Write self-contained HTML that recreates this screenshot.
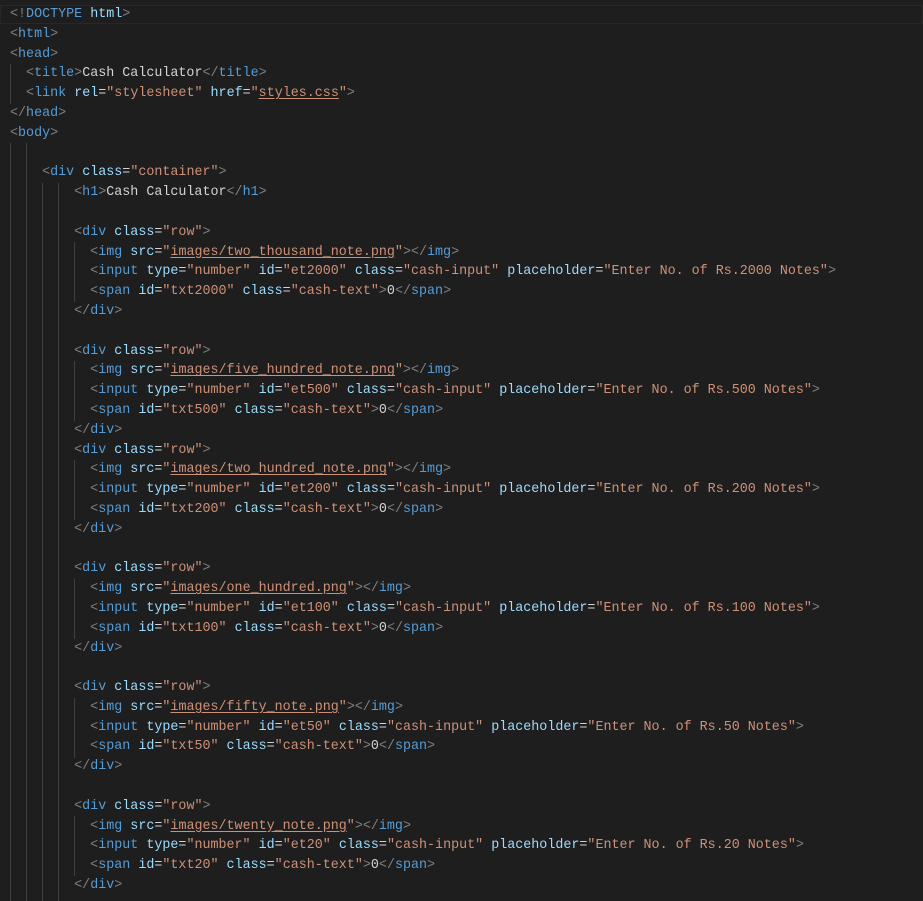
<!DOCTYPE html>
<html><head><style>
html,body{margin:0;padding:0;background:#1e1e1e;width:923px;height:901px;overflow:hidden;position:relative}
.c{position:absolute;left:10px;top:5px;font-family:"Liberation Mono",monospace;font-size:13.36px;line-height:19.8px;color:#d4d4d4}
.c div{height:19.8px;white-space:pre}
.t{color:#808080}.n{color:#569cd6}.a{color:#9cdcfe}.s{color:#ce9178}.u{text-decoration:underline;text-underline-offset:2px}
.g{position:absolute;width:1px;background:#404040}
.hl{position:absolute;left:0;top:5px;width:923px;height:19px;border:1px solid #282828;box-sizing:border-box}
</style></head><body>
<div class="hl"></div>
<div class="g" style="left:10px;top:64px;height:40px"></div>
<div class="g" style="left:10px;top:143px;height:759px"></div>
<div class="g" style="left:26px;top:143px;height:759px"></div>
<div class="g" style="left:42px;top:183px;height:719px"></div>
<div class="g" style="left:58px;top:183px;height:719px"></div>
<div class="g" style="left:74px;top:242px;height:60px"></div>
<div class="g" style="left:74px;top:361px;height:60px"></div>
<div class="g" style="left:74px;top:460px;height:60px"></div>
<div class="g" style="left:74px;top:579px;height:60px"></div>
<div class="g" style="left:74px;top:698px;height:60px"></div>
<div class="g" style="left:74px;top:816px;height:60px"></div>
<div class="c">
<div><span class="t">&lt;!</span><span class="n">DOCTYPE</span> <span class="a">html</span><span class="t">&gt;</span></div>
<div><span class="t">&lt;</span><span class="n">html</span><span class="t">&gt;</span></div>
<div><span class="t">&lt;</span><span class="n">head</span><span class="t">&gt;</span></div>
<div>  <span class="t">&lt;</span><span class="n">title</span><span class="t">&gt;</span>Cash Calculator<span class="t">&lt;/</span><span class="n">title</span><span class="t">&gt;</span></div>
<div>  <span class="t">&lt;</span><span class="n">link</span> <span class="a">rel</span>=<span class="s">"stylesheet"</span> <span class="a">href</span>=<span class="s">"<span class="u">styles.css</span>"</span><span class="t">&gt;</span></div>
<div><span class="t">&lt;/</span><span class="n">head</span><span class="t">&gt;</span></div>
<div><span class="t">&lt;</span><span class="n">body</span><span class="t">&gt;</span></div>
<div></div>
<div>    <span class="t">&lt;</span><span class="n">div</span> <span class="a">class</span>=<span class="s">"container"</span><span class="t">&gt;</span></div>
<div>        <span class="t">&lt;</span><span class="n">h1</span><span class="t">&gt;</span>Cash Calculator<span class="t">&lt;/</span><span class="n">h1</span><span class="t">&gt;</span></div>
<div></div>
<div>        <span class="t">&lt;</span><span class="n">div</span> <span class="a">class</span>=<span class="s">"row"</span><span class="t">&gt;</span></div>
<div>          <span class="t">&lt;</span><span class="n">img</span> <span class="a">src</span>=<span class="s">"<span class="u">images/two_thousand_note.png</span>"</span><span class="t">&gt;&lt;/</span><span class="n">img</span><span class="t">&gt;</span></div>
<div>          <span class="t">&lt;</span><span class="n">input</span> <span class="a">type</span>=<span class="s">"number"</span> <span class="a">id</span>=<span class="s">"et2000"</span> <span class="a">class</span>=<span class="s">"cash-input"</span> <span class="a">placeholder</span>=<span class="s">"Enter No. of Rs.2000 Notes"</span><span class="t">&gt;</span></div>
<div>          <span class="t">&lt;</span><span class="n">span</span> <span class="a">id</span>=<span class="s">"txt2000"</span> <span class="a">class</span>=<span class="s">"cash-text"</span><span class="t">&gt;</span>0<span class="t">&lt;/</span><span class="n">span</span><span class="t">&gt;</span></div>
<div>        <span class="t">&lt;/</span><span class="n">div</span><span class="t">&gt;</span></div>
<div></div>
<div>        <span class="t">&lt;</span><span class="n">div</span> <span class="a">class</span>=<span class="s">"row"</span><span class="t">&gt;</span></div>
<div>          <span class="t">&lt;</span><span class="n">img</span> <span class="a">src</span>=<span class="s">"<span class="u">images/five_hundred_note.png</span>"</span><span class="t">&gt;&lt;/</span><span class="n">img</span><span class="t">&gt;</span></div>
<div>          <span class="t">&lt;</span><span class="n">input</span> <span class="a">type</span>=<span class="s">"number"</span> <span class="a">id</span>=<span class="s">"et500"</span> <span class="a">class</span>=<span class="s">"cash-input"</span> <span class="a">placeholder</span>=<span class="s">"Enter No. of Rs.500 Notes"</span><span class="t">&gt;</span></div>
<div>          <span class="t">&lt;</span><span class="n">span</span> <span class="a">id</span>=<span class="s">"txt500"</span> <span class="a">class</span>=<span class="s">"cash-text"</span><span class="t">&gt;</span>0<span class="t">&lt;/</span><span class="n">span</span><span class="t">&gt;</span></div>
<div>        <span class="t">&lt;/</span><span class="n">div</span><span class="t">&gt;</span></div>
<div>        <span class="t">&lt;</span><span class="n">div</span> <span class="a">class</span>=<span class="s">"row"</span><span class="t">&gt;</span></div>
<div>          <span class="t">&lt;</span><span class="n">img</span> <span class="a">src</span>=<span class="s">"<span class="u">images/two_hundred_note.png</span>"</span><span class="t">&gt;&lt;/</span><span class="n">img</span><span class="t">&gt;</span></div>
<div>          <span class="t">&lt;</span><span class="n">input</span> <span class="a">type</span>=<span class="s">"number"</span> <span class="a">id</span>=<span class="s">"et200"</span> <span class="a">class</span>=<span class="s">"cash-input"</span> <span class="a">placeholder</span>=<span class="s">"Enter No. of Rs.200 Notes"</span><span class="t">&gt;</span></div>
<div>          <span class="t">&lt;</span><span class="n">span</span> <span class="a">id</span>=<span class="s">"txt200"</span> <span class="a">class</span>=<span class="s">"cash-text"</span><span class="t">&gt;</span>0<span class="t">&lt;/</span><span class="n">span</span><span class="t">&gt;</span></div>
<div>        <span class="t">&lt;/</span><span class="n">div</span><span class="t">&gt;</span></div>
<div></div>
<div>        <span class="t">&lt;</span><span class="n">div</span> <span class="a">class</span>=<span class="s">"row"</span><span class="t">&gt;</span></div>
<div>          <span class="t">&lt;</span><span class="n">img</span> <span class="a">src</span>=<span class="s">"<span class="u">images/one_hundred.png</span>"</span><span class="t">&gt;&lt;/</span><span class="n">img</span><span class="t">&gt;</span></div>
<div>          <span class="t">&lt;</span><span class="n">input</span> <span class="a">type</span>=<span class="s">"number"</span> <span class="a">id</span>=<span class="s">"et100"</span> <span class="a">class</span>=<span class="s">"cash-input"</span> <span class="a">placeholder</span>=<span class="s">"Enter No. of Rs.100 Notes"</span><span class="t">&gt;</span></div>
<div>          <span class="t">&lt;</span><span class="n">span</span> <span class="a">id</span>=<span class="s">"txt100"</span> <span class="a">class</span>=<span class="s">"cash-text"</span><span class="t">&gt;</span>0<span class="t">&lt;/</span><span class="n">span</span><span class="t">&gt;</span></div>
<div>        <span class="t">&lt;/</span><span class="n">div</span><span class="t">&gt;</span></div>
<div></div>
<div>        <span class="t">&lt;</span><span class="n">div</span> <span class="a">class</span>=<span class="s">"row"</span><span class="t">&gt;</span></div>
<div>          <span class="t">&lt;</span><span class="n">img</span> <span class="a">src</span>=<span class="s">"<span class="u">images/fifty_note.png</span>"</span><span class="t">&gt;&lt;/</span><span class="n">img</span><span class="t">&gt;</span></div>
<div>          <span class="t">&lt;</span><span class="n">input</span> <span class="a">type</span>=<span class="s">"number"</span> <span class="a">id</span>=<span class="s">"et50"</span> <span class="a">class</span>=<span class="s">"cash-input"</span> <span class="a">placeholder</span>=<span class="s">"Enter No. of Rs.50 Notes"</span><span class="t">&gt;</span></div>
<div>          <span class="t">&lt;</span><span class="n">span</span> <span class="a">id</span>=<span class="s">"txt50"</span> <span class="a">class</span>=<span class="s">"cash-text"</span><span class="t">&gt;</span>0<span class="t">&lt;/</span><span class="n">span</span><span class="t">&gt;</span></div>
<div>        <span class="t">&lt;/</span><span class="n">div</span><span class="t">&gt;</span></div>
<div></div>
<div>        <span class="t">&lt;</span><span class="n">div</span> <span class="a">class</span>=<span class="s">"row"</span><span class="t">&gt;</span></div>
<div>          <span class="t">&lt;</span><span class="n">img</span> <span class="a">src</span>=<span class="s">"<span class="u">images/twenty_note.png</span>"</span><span class="t">&gt;&lt;/</span><span class="n">img</span><span class="t">&gt;</span></div>
<div>          <span class="t">&lt;</span><span class="n">input</span> <span class="a">type</span>=<span class="s">"number"</span> <span class="a">id</span>=<span class="s">"et20"</span> <span class="a">class</span>=<span class="s">"cash-input"</span> <span class="a">placeholder</span>=<span class="s">"Enter No. of Rs.20 Notes"</span><span class="t">&gt;</span></div>
<div>          <span class="t">&lt;</span><span class="n">span</span> <span class="a">id</span>=<span class="s">"txt20"</span> <span class="a">class</span>=<span class="s">"cash-text"</span><span class="t">&gt;</span>0<span class="t">&lt;/</span><span class="n">span</span><span class="t">&gt;</span></div>
<div>        <span class="t">&lt;/</span><span class="n">div</span><span class="t">&gt;</span></div>
</div>
</body></html>
